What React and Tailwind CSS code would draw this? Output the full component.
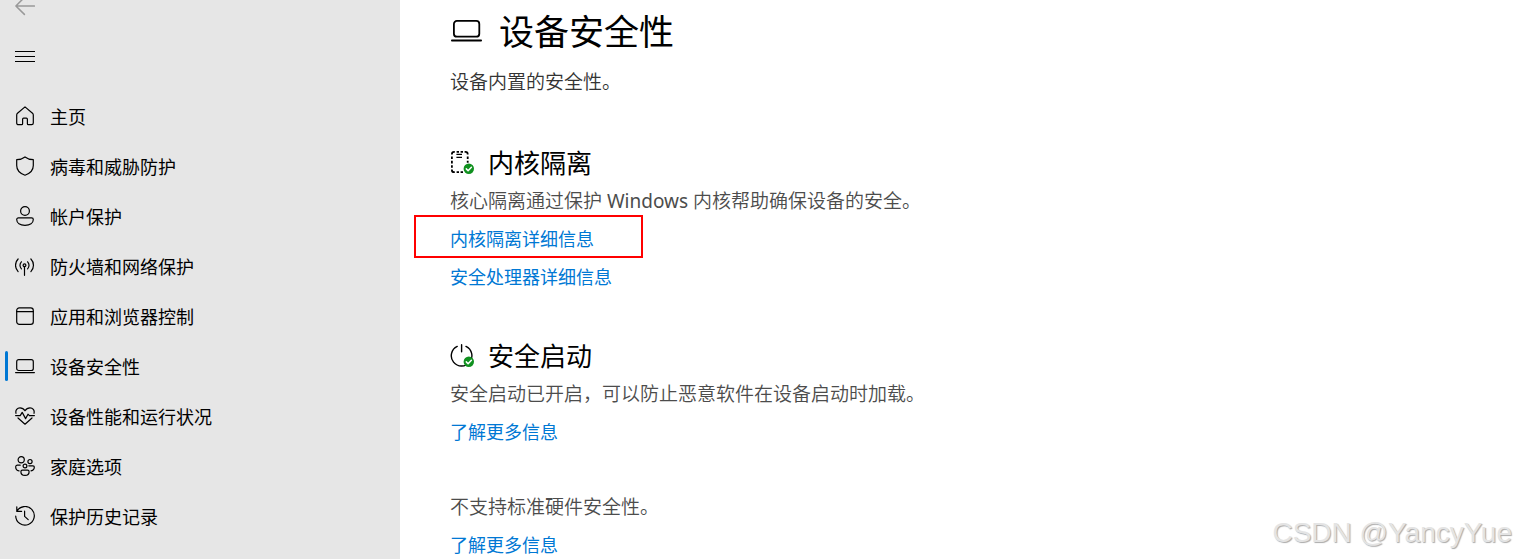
import React from "react";

const strokeProps = {
  fill: "none",
  stroke: "currentColor",
  strokeWidth: 1.2,
  strokeLinecap: "round",
  strokeLinejoin: "round",
};

function Icon({ children }) {
  return (
    <svg viewBox="0 0 20 20" className="size-5 shrink-0" aria-hidden="true" {...strokeProps}>
      {children}
    </svg>
  );
}

const navItems = [
  {
    label: "主页",
    icon: (
      <path d="M10 .9 17.5 7.3Q18.3 8 18.3 9.1V17a1.7 1.7 0 0 1-1.7 1.7H13.4a1 1 0 0 1-1-1V13.2a1 1 0 0 0-1-1H8.6a1 1 0 0 0-1 1v4.5a1 1 0 0 1-1 1H3.4A1.7 1.7 0 0 1 1.7 17V9.1Q1.7 8 2.5 7.3Z" />
    ),
  },
  {
    label: "病毒和威胁防护",
    icon: (
      <path d="M10 .9C12.4 2.7 15.2 3.6 18.3 3.7V9.5C18.3 14 15.5 17.3 10 19.2 4.5 17.3 1.7 14 1.7 9.5V3.7C4.8 3.6 7.6 2.7 10 .9Z" />
    ),
  },
  {
    label: "帐户保护",
    icon: (
      <>
        <circle cx="10" cy="5" r="4.4" />
        <path d="M3.4 11.9H16.6A1.7 1.7 0 0 1 18.3 13.6C18.3 17 15 19.3 10 19.3S1.7 17 1.7 13.6A1.7 1.7 0 0 1 3.4 11.9Z" />
      </>
    ),
  },
  {
    label: "防火墙和网络保护",
    icon: (
      <>
        <circle cx="9.5" cy="9.3" r="1.4" />
        <path d="M9.5 10.8V19.3M6.4 5.8A5 5 0 0 0 6.4 12.8M12.6 5.8A5 5 0 0 1 12.6 12.8M3.1 3A9 9 0 0 0 3.1 15.6M15.9 3A9 9 0 0 1 15.9 15.6" />
      </>
    ),
  },
  {
    label: "应用和浏览器控制",
    icon: (
      <>
        <rect x="1.7" y="1.8" width="16.6" height="16.6" rx="2.6" />
        <path d="M1.7 5.6H18.3" />
      </>
    ),
  },
  {
    label: "设备安全性",
    active: true,
    icon: (
      <>
        <rect x="1.7" y="3.7" width="16.6" height="10.8" rx="2" />
        <path d="M.6 16.6H19.4" />
      </>
    ),
  },
  {
    label: "设备性能和运行状况",
    icon: (
      <>
        <path d="M1 7.3C.2 4 2.3 1.8 5 1.8 7.4 1.8 9 3.2 10 4.8 11 3.2 12.6 1.8 15 1.8 17.7 1.8 19.8 4 19 7.3" />
        <path d="M.6 9.6H5.2L7.2 6.4 10.6 12.6 13 8.2 14.4 9.6H19.4M3 12 10 18.2 17 12" />
      </>
    ),
  },
  {
    label: "家庭选项",
    icon: (
      <>
        <circle cx="6.2" cy="3.8" r="3.1" />
        <circle cx="15" cy="5.6" r="2.1" />
        <circle cx="10" cy="10" r="1.9" />
        <path d="M5.2 9.2H2.4A1.7 1.7 0 0 0 .7 10.9C.7 13 2 14.5 4 14.8M13.8 9.8H18A1.3 1.3 0 0 1 19.3 11.1C19.3 13.4 18 14.6 16 14.8" />
        <path d="M7.4 14.2H12.6A1.5 1.5 0 0 1 14.1 15.7C14.1 18 12.6 19.4 10 19.4S5.9 18 5.9 15.7A1.5 1.5 0 0 1 7.4 14.2Z" />
      </>
    ),
  },
  {
    label: "保护历史记录",
    icon: (
      <>
        <path d="M1.8 5.4A9.3 9.3 0 1 1 .7 10M1.8.8V5.4H6.6" />
        <path d="M9.6 5.2V10.4L13.2 13.6" />
      </>
    ),
  },
];

function CheckBadge() {
  return (
    <g>
      <circle cx="18.8" cy="18.8" r="5.2" fill="#10911f" stroke="none" />
      <path d="M16.3 18.9 18.1 20.7 21.4 17.3" stroke="#fff" strokeWidth="1.5" />
    </g>
  );
}

function CoreIsolationIcon() {
  return (
    <svg viewBox="0 1 24 24" className="size-6 shrink-0" aria-hidden="true" {...strokeProps} strokeWidth="1.8">
      <g strokeLinecap="butt">
        <path d="M1.9 4.6V4.2Q1.9 1.9 4.2 1.9H4.8M6.6 1.9H9M10.6 1.9H13M14.6 1.9H15.4Q17.7 1.9 17.7 4.2V4.6" />
        <path d="M1.9 6.4V9M1.9 10.8V13.4M1.9 15.2V17.8M17.7 6.4V9M17.7 10.8V12.8" />
        <path d="M1.9 19.4V19.9Q1.9 22.2 4.2 22.2H4.8M6.6 22.2H9M10.6 22.2H13" />
        <path d="M6.4 4.4H12M6.4 7.4H12" strokeWidth="1.4" />
      </g>
      <CheckBadge />
    </svg>
  );
}

function SecureBootIcon() {
  return (
    <svg viewBox="0 1 24 24" className="size-6 shrink-0" aria-hidden="true" {...strokeProps} strokeWidth="1.4">
      <path d="M7.2 3.4A10.3 10.3 0 1 0 16 3.4M11.6 1.7V8.8" />
      <CheckBadge />
    </svg>
  );
}

function Section({ id, icon, title, children }) {
  return (
    <section aria-labelledby={id} className="flex flex-col items-start gap-2.5">
      <div className="flex h-7 items-center gap-3.5">
        {icon}
        <h2 id={id} className="text-[26px] leading-7">{title}</h2>
      </div>
      {children}
    </section>
  );
}

function Description({ children }) {
  return <p className="text-[19px] leading-7 font-[350] text-[#4c4c4c]">{children}</p>;
}

function TextLink({ children }) {
  return (
    <a href="#" className="text-lg leading-7 text-[#0078d4] hover:underline">
      {children}
    </a>
  );
}

export default function App() {
  return (
    <div className="relative flex h-screen overflow-hidden bg-white font-['Noto_Sans','Noto_Sans_CJK_SC',sans-serif] font-normal text-black">
      <aside className="w-[400px] shrink-0 bg-[#e6e6e6]">
        <button type="button" aria-label="返回" className="flex h-[31px] items-start px-[15px] text-[#999]">
          <svg viewBox="0 4 20 16" className="h-4 w-5" aria-hidden="true" {...strokeProps} strokeWidth="1.5">
            <path d="M19.4 10H1M9.4 1.4.9 10 9.4 18.4" />
          </svg>
        </button>
        <button type="button" aria-label="菜单" className="flex h-[50px] items-center px-[15px]">
          <svg viewBox="0 0 20 20" className="size-5" aria-hidden="true" {...strokeProps} strokeLinecap="butt" strokeWidth="1">
            <path d="M0 5.5H20M0 10.5H20M0 15.5H20" />
          </svg>
        </button>
        <nav className="mt-2.5">
          <ul>
            {navItems.map((item) => (
              <li key={item.label} className="relative">
                {item.active && (
                  <span className="absolute top-2.5 left-[5px] h-[30px] w-[3px] rounded-full bg-[#0078d4]" />
                )}
                <a
                  href="#"
                  aria-current={item.active ? "page" : undefined}
                  className="flex h-[50px] items-center gap-[15px] px-[15px] text-lg"
                >
                  <Icon>{item.icon}</Icon>
                  <span className="pt-0.5">{item.label}</span>
                </a>
              </li>
            ))}
          </ul>
        </nav>
      </aside>

      <main className="flex min-w-0 flex-1 flex-col px-[50px] pt-2">
        <header>
          <div className="flex h-12 items-center gap-[17px]">
            <svg viewBox="0 0 32 24" className="h-6 w-8 shrink-0" aria-hidden="true" {...strokeProps} strokeWidth="1.8">
              <rect x="3.9" y=".9" width="25.4" height="15.8" rx="3" />
              <path d="M1.9 20.5H31.1" />
            </svg>
            <h1 className="text-[35px] leading-[48px]">设备安全性</h1>
          </div>
          <p className="mt-3 text-[19px] leading-7 font-[350] text-[#333]">设备内置的安全性。</p>
        </header>

        <div className="mt-[53px] flex flex-col gap-[51px]">
          <Section id="core-isolation" icon={<CoreIsolationIcon />} title="内核隔离">
            <Description>
              核心隔离通过保护 <span className="font-normal">Windows</span> 内核帮助确保设备的安全。
            </Description>
            <div className="relative flex">
              <TextLink>内核隔离详细信息</TextLink>
              <span className="pointer-events-none absolute -top-2.5 -left-9 h-[43px] w-[229px] border-2 border-[#f00]" />
            </div>
            <TextLink>安全处理器详细信息</TextLink>
          </Section>

          <Section id="secure-boot" icon={<SecureBootIcon />} title="安全启动">
            <Description>安全启动已开启，可以防止恶意软件在设备启动时加载。</Description>
            <TextLink>了解更多信息</TextLink>
          </Section>

          <section className="-mt-1 flex flex-col items-start gap-2.5">
            <Description>不支持标准硬件安全性。</Description>
            <TextLink>了解更多信息</TextLink>
          </section>
        </div>
      </main>

      <div className="absolute right-1 bottom-2 font-['Liberation_Sans',sans-serif] text-[28px] leading-9 font-normal text-[#e4e4e4] [text-shadow:1px_1px_1px_#aaa]">
        CSDN @YancyYue
      </div>
    </div>
  );
}
